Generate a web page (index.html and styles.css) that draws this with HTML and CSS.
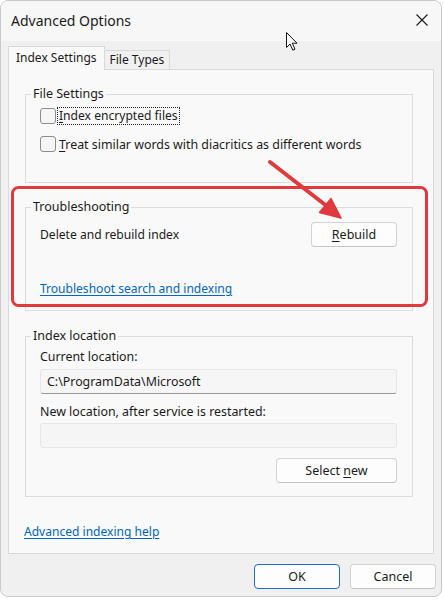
FILE: index.html
```html
<!DOCTYPE html>
<html>
<head>
<meta charset="utf-8">
<link rel="stylesheet" href="styles.css">
</head>
<body>
<div class="window">
  <div class="titlebar">
    <span class="title">Advanced Options</span>
    <svg class="close" width="12" height="12" viewBox="0 0 12 12"><path d="M0.5 0.5L11.5 11.5M11.5 0.5L0.5 11.5" stroke="#1a1a1a" stroke-width="1.1" fill="none"/></svg>
  </div>
  <div class="tabs">
    <div class="tab active">Index Settings</div>
    <div class="tab">File Types</div>
  </div>
  <div class="page">
    <fieldset class="group g1">
      <legend>File Settings</legend>
      <div class="gbody">
        <label class="check"><span class="box"></span><span class="focus"><u>I</u>ndex encrypted files</span></label>
        <label class="check second"><span class="box"></span><span class="lab"><u>T</u>reat similar words with diacritics as different words</span></label>
      </div>
    </fieldset>
    <fieldset class="group g2">
      <legend>Troubleshooting</legend>
      <div class="gbody">
        <div class="row"><span class="desc">Delete and rebuild index</span><button class="btn"><u>R</u>ebuild</button></div>
        <a class="link trouble" href="#">Troubleshoot search and indexing</a>
      </div>
    </fieldset>
    <fieldset class="group g3">
      <legend>Index location</legend>
      <div class="gbody">
        <div class="lbl">Current location:</div>
        <div class="input">C:\ProgramData\Microsoft</div>
        <div class="lbl second">New location, after service is restarted:</div>
        <div class="input disabled"></div>
        <div class="btnrow"><button class="btn wide">Select <u>n</u>ew</button></div>
      </div>
    </fieldset>
    <a class="link help" href="#">Advanced indexing help</a>
  </div>
  <div class="footer">
    <button class="btn ok">OK</button>
    <button class="btn">Cancel</button>
  </div>
</div>
<svg class="overlay" width="444" height="600" viewBox="0 0 444 600">
  <rect x="12.5" y="187.5" width="414" height="118" rx="6" ry="6" fill="none" stroke="#e0393e" stroke-width="3"/>
  <line x1="270" y1="162" x2="328" y2="207" stroke="#e0393e" stroke-width="4" stroke-linecap="round"/>
  <polygon points="319.5,212.5 341,218 331,198.5" fill="#e0393e" stroke="#e0393e" stroke-width="1.5" stroke-linejoin="round"/>
  <path d="M286.5 32.5 L286.5 47.5 L290 44 L292.8 50.2 L295 49.2 L292.3 43.2 L297 43.2 Z" fill="#fff" stroke="#111" stroke-width="1" stroke-linejoin="round"/>
</svg>
</body>
</html>
```
FILE: styles.css
```css
body {
  margin: 0;
  background: #ffffff;
  font-family: "Noto Sans", "Open Sans", sans-serif;
  font-size: 12.4px;
  color: #1b1b1b;
  position: relative;
  width: 444px;
  height: 600px;
  overflow: hidden;
}

.window {
  width: 442px;
  height: 597px;
  box-sizing: border-box;
  border: 1px solid #c9c9c9;
  border-radius: 8px;
  background: #f0f0f0;
  overflow: hidden;
  display: flex;
  flex-direction: column;
}

.titlebar {
  height: 40px;
  flex: none;
  background: #f7f7f7;
  display: flex;
  align-items: center;
  justify-content: space-between;
  padding: 0 13px 2px 10px;
  box-sizing: border-box;
}

.title {
  font-size: 14px;
  color: #1a1a1a;
}

.tabs {
  display: flex;
  align-items: flex-end;
  height: 23px;
  margin: 5px 0 0 7px;
  position: relative;
  z-index: 1;
}

.tab {
  height: 19px;
  box-sizing: border-box;
  padding: 0 5px;
  border-top: 1px solid #d9d9d9;
  border-right: 1px solid #d9d9d9;
  background: #f0f0f0;
  line-height: 18px;
  font-size: 12px;
}

.tab.active {
  height: 24px;
  margin-bottom: -1px;
  padding: 0 7px;
  border-left: 1px solid #d9d9d9;
  background: #f9f9f9;
  line-height: 22px;
}

.page {
  margin-left: 7px;
  width: 426px;
  height: 485px;
  box-sizing: border-box;
  border: 1px solid #d9d9d9;
  background: #f9f9f9;
  padding: 16px 21px 0 16px;
  flex: none;
}

.group {
  margin: 0;
  padding: 0;
  border: 1px solid #dcdcdc;
  min-width: 0;
  width: 388px;
  box-sizing: border-box;
}

.group legend {
  margin-left: 5px;
  padding: 0 2px;
  line-height: 16px;
  font-size: 12.5px;
}

.g2 {
  margin-top: 16px;
}

.g3 {
  margin-top: 17px;
}

.g1 .gbody {
  padding: 4px 14px 28px 14px;
}

.check {
  display: flex;
  align-items: center;
  height: 20px;
  gap: 3px;
}

.check.second {
  margin-top: 8px;
}

.box {
  width: 16px;
  height: 16px;
  box-sizing: border-box;
  border: 1px solid #8d8d8d;
  border-radius: 3px;
  background: #f6f6f6;
  flex: none;
}

.focus {
  outline: 1px dotted #222;
  padding: 0 1px;
  margin-left: -1px;
  line-height: 16px;
  font-size: 12.1px;
}

u {
  text-decoration: underline;
  text-underline-offset: 2px;
}

.g2 .gbody {
  padding: 7px 15px 11px 14px;
}

.row {
  display: flex;
  justify-content: space-between;
  align-items: center;
  height: 25px;
}

.desc {
  font-size: 12.1px;
}

.btn {
  font-family: inherit;
  font-size: 12.5px;
  color: #1b1b1b;
  width: 86px;
  height: 25px;
  box-sizing: border-box;
  border: 1px solid #d3d3d3;
  border-bottom-color: #c3c3c3;
  border-radius: 4px;
  background: #fdfdfd;
  padding: 0;
  line-height: 22px;
}

.btn.wide {
  width: 121px;
}

.btn.ok {
  border: 1px solid #1a6fc2;
}

.link {
  display: block;
  color: #0066bf;
  text-decoration: underline;
  text-underline-offset: 2px;
  line-height: 20px;
  width: max-content;
  font-size: 12.05px;
}

.trouble {
  margin-top: 32px;
}

.g3 .gbody {
  padding: 3px 15px 13px 14px;
}

.lbl {
  line-height: 20px;
}

.lbl.second {
  margin-top: 8px;
}

.input {
  margin-top: 2px;
  height: 25px;
  box-sizing: border-box;
  border: 1px solid #e6e6e6;
  border-bottom: 1px solid #9a9a9a;
  border-radius: 3px;
  background: #f6f6f6;
  padding: 0 6px;
  line-height: 23px;
}

.input.disabled {
  margin-top: 1px;
  border-bottom: 1px solid #e6e6e6;
  background: #f5f5f5;
}

.btnrow {
  display: flex;
  justify-content: flex-end;
  margin-top: 10px;
}

.help {
  margin-top: 25px;
  margin-left: -1px;
}

.footer {
  display: flex;
  justify-content: flex-end;
  gap: 10px;
  margin-top: 10px;
  padding-right: 5px;
}

.overlay {
  position: absolute;
  left: 0;
  top: 0;
  pointer-events: none;
}
```
